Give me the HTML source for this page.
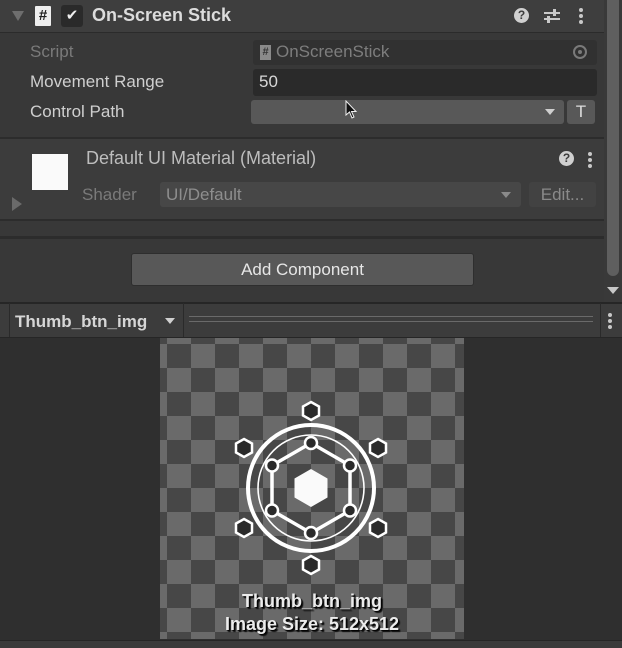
<!DOCTYPE html>
<html><head><meta charset="utf-8"><style>
*{box-sizing:border-box;margin:0;padding:0}
body{width:622px;height:648px;overflow:hidden;background:#383838;font-family:"Liberation Sans","DejaVu Sans",sans-serif;font-size:17px;color:#d2d2d2;position:relative}
.a{position:absolute}
.lbl{position:absolute;left:30px;font-size:17px;color:#cfcfcf}
.fld{position:absolute;border-radius:3px}
</style></head><body>
<div class="a" style="left:0;top:0;width:604px;height:33px;background:#3e3e3e;border-bottom:1px solid #2b2b2b"></div>
<div class="a" style="left:12px;top:11px;width:0;height:0;border-left:6px solid transparent;border-right:6px solid transparent;border-top:10px solid #6e6e6e"></div>
<div class="a" style="left:35px;top:6px;width:16px;height:20px;background:#eee;border-radius:1px;color:#222;font-size:15px;font-weight:bold;text-align:center;line-height:20px">#</div>
<div class="a" style="left:61px;top:5px;width:22px;height:22px;background:#2a2a2a;border-radius:3px;color:#eee;font-size:15px;text-align:center;line-height:22px">✔</div>
<div class="a" style="left:92px;top:5px;font-size:18px;font-weight:bold;color:#dcdcdc">On-Screen Stick</div>
<div class="a" style="left:514px;top:8px;width:15px;height:15px;border-radius:50%;background:#d0d0d0;color:#3e3e3e;font-size:12px;font-weight:bold;text-align:center;line-height:15px">?</div>
<svg class="a" style="left:543px;top:7px" width="18" height="18"><path d="M1 6H17M1 12H17" stroke="#c8c8c8" stroke-width="2"/><rect x="10" y="2" width="3" height="7" fill="#c8c8c8"/><rect x="4" y="9" width="3" height="7" fill="#c8c8c8"/></svg>
<svg class="a" style="left:578px;top:7px" width="6" height="18"><circle cx="3" cy="3" r="2" fill="#c8c8c8"/><circle cx="3" cy="9" r="2" fill="#c8c8c8"/><circle cx="3" cy="15" r="2" fill="#c8c8c8"/></svg>
<div class="lbl" style="top:42px;color:#7a7a7a">Script</div>
<div class="fld" style="left:253px;top:40px;width:344px;height:25px;background:#313131"></div>
<div class="a" style="left:260px;top:45px;width:11px;height:15px;background:#8a8a8a;color:#333;font-size:11px;font-weight:bold;text-align:center;line-height:15px">#</div>
<div class="a" style="left:276px;top:42px;color:#7d7d7d">OnScreenStick</div>
<div class="a" style="left:573px;top:45px;width:14px;height:14px;border:2px solid #7a7a7a;border-radius:50%"></div>
<div class="a" style="left:578px;top:50px;width:4px;height:4px;background:#7a7a7a;border-radius:50%"></div>
<div class="lbl" style="top:72px">Movement Range</div>
<div class="fld" style="left:253px;top:69px;width:344px;height:27px;background:#2a2a2a"></div>
<div class="a" style="left:259px;top:72px;color:#d8d8d8">50</div>
<div class="lbl" style="top:102px">Control Path</div>
<div class="fld" style="left:251px;top:100px;width:313px;height:24px;background:#585858"></div>
<div class="a" style="left:545px;top:109px;border-left:5px solid transparent;border-right:5px solid transparent;border-top:6px solid #cfcfcf"></div>
<div class="fld" style="left:567px;top:100px;width:28px;height:24px;background:#585858;text-align:center;line-height:24px;color:#ddd;font-size:17px">T</div>
<svg class="a" style="left:345px;top:100px" width="14" height="20"><path d="M1 1V15L4.5 12L7 18L9 17L6.5 11.5H11Z" fill="#111" stroke="#eee" stroke-width="1"/></svg>
<div class="a" style="left:0;top:137px;width:604px;height:2px;background:#2c2c2c"></div>
<div class="a" style="left:0;top:139px;width:604px;height:82px;background:#3c3c3c;border-bottom:2px solid #2c2c2c"></div>
<div class="a" style="left:32px;top:154px;width:36px;height:36px;background:#fafafa"></div>
<div class="a" style="left:12px;top:197px;border-top:7px solid transparent;border-bottom:7px solid transparent;border-left:10px solid #6a6a6a"></div>
<div class="a" style="left:86px;top:148px;color:#bdbdbd;font-size:18px">Default UI Material (Material)</div>
<div class="a" style="left:559px;top:151px;width:15px;height:15px;border-radius:50%;background:#d0d0d0;color:#3c3c3c;font-size:12px;font-weight:bold;text-align:center;line-height:15px">?</div>
<svg class="a" style="left:587px;top:151px" width="6" height="18"><circle cx="3" cy="3" r="2" fill="#c8c8c8"/><circle cx="3" cy="9" r="2" fill="#c8c8c8"/><circle cx="3" cy="15" r="2" fill="#c8c8c8"/></svg>
<div class="a" style="left:82px;top:185px;color:#7a7a7a">Shader</div>
<div class="fld" style="left:160px;top:182px;width:361px;height:25px;background:#474747"></div>
<div class="a" style="left:166px;top:185px;color:#8e8e8e">UI/Default</div>
<div class="a" style="left:501px;top:192px;border-left:5px solid transparent;border-right:5px solid transparent;border-top:6px solid #8a8a8a"></div>
<div class="fld" style="left:529px;top:182px;width:67px;height:25px;background:#424242;color:#8a8a8a;text-align:center;line-height:25px">Edit...</div>
<div class="a" style="left:0;top:236px;width:604px;height:3px;background:#2c2c2c"></div>
<div class="fld" style="left:131px;top:253px;width:343px;height:33px;background:#585858;border:1px solid #2e2e2e;text-align:center;line-height:31px;color:#e6e6e6">Add Component</div>
<div class="a" style="left:604px;top:0;width:18px;height:302px;background:#393939"></div>
<div class="a" style="left:607px;top:0;width:12px;height:276px;background:#5f5f5f;border-radius:0 0 6px 6px"></div>
<div class="a" style="left:607px;top:287px;border-left:6px solid transparent;border-right:6px solid transparent;border-top:7px solid #c8c8c8"></div>
<div class="a" style="left:0;top:302px;width:622px;height:36px;background:#3c3c3c;border-top:2px solid #262626;border-bottom:1px solid #262626"></div>
<div class="a" style="left:9px;top:303px;width:175px;height:34px;border-left:1px solid #2a2a2a;border-right:1px solid #2a2a2a"></div>
<div class="a" style="left:15px;top:312px;font-weight:bold;color:#d6d6d6">Thumb_btn_img</div>
<div class="a" style="left:165px;top:318px;border-left:5px solid transparent;border-right:5px solid transparent;border-top:6px solid #d0d0d0"></div>
<div class="a" style="left:189px;top:316px;width:404px;height:6px;border-top:1px solid #6a6a6a;border-bottom:1px solid #6a6a6a"></div>
<div class="a" style="left:600px;top:303px;width:1px;height:34px;background:#2a2a2a"></div>
<svg class="a" style="left:607px;top:312px" width="6" height="18"><circle cx="3" cy="3" r="2" fill="#c8c8c8"/><circle cx="3" cy="9" r="2" fill="#c8c8c8"/><circle cx="3" cy="15" r="2" fill="#c8c8c8"/></svg>
<div class="a" style="left:0;top:338px;width:622px;height:310px;background:#2f2f2f"></div>
<div class="a" style="left:0;top:640px;width:622px;height:8px;background:#3a3a3a;border-top:1px solid #252525"></div>
<div class="a" style="left:160px;top:338px;width:304px;height:301px;background:repeating-conic-gradient(#6a6a6a 0 25%,#474747 0 50%) 7px 6px/48px 48px"></div>
<svg class="a" style="left:160px;top:338px" width="304" height="301">
<g transform="translate(151,150)" fill="none" stroke="#fff">
<circle r="63" stroke-width="4"/>
<circle r="53" stroke-width="1.6"/>
<polygon points="0,-45 39,-22.5 39,22.5 0,45 -39,22.5 -39,-22.5" stroke-width="3.5"/>
<polygon points="0,-19 16.5,-9.5 16.5,9.5 0,19 -16.5,9.5 -16.5,-9.5" fill="#fafafa" stroke="none"/>
<g fill="#2a2a2a" stroke-width="2.5">
<circle cx="0" cy="-45" r="6"/><circle cx="39" cy="-22.5" r="6"/><circle cx="39" cy="22.5" r="6"/><circle cx="0" cy="45" r="6"/><circle cx="-39" cy="22.5" r="6"/><circle cx="-39" cy="-22.5" r="6"/>
</g>
<g fill="#2a2a2a" stroke-width="2.5">
<polygon transform="translate(0,-77)" points="0,-9 8,-4.5 8,4.5 0,9 -8,4.5 -8,-4.5"/>
<polygon transform="translate(0,77)" points="0,-9 8,-4.5 8,4.5 0,9 -8,4.5 -8,-4.5"/>
<polygon transform="translate(67,-40)" points="0,-9 8,-4.5 8,4.5 0,9 -8,4.5 -8,-4.5"/>
<polygon transform="translate(-67,-40)" points="0,-9 8,-4.5 8,4.5 0,9 -8,4.5 -8,-4.5"/>
<polygon transform="translate(67,40)" points="0,-9 8,-4.5 8,4.5 0,9 -8,4.5 -8,-4.5"/>
<polygon transform="translate(-67,40)" points="0,-9 8,-4.5 8,4.5 0,9 -8,4.5 -8,-4.5"/>
</g>
</g>
</svg>
<div class="a" style="left:160px;top:590px;width:304px;text-align:center;color:#ececec;font-size:18px;font-weight:bold;line-height:23px;text-shadow:1px 1px 1px #000,2px 2px 1px #111">Thumb_btn_img<br>Image Size: 512x512</div>
</body></html>
